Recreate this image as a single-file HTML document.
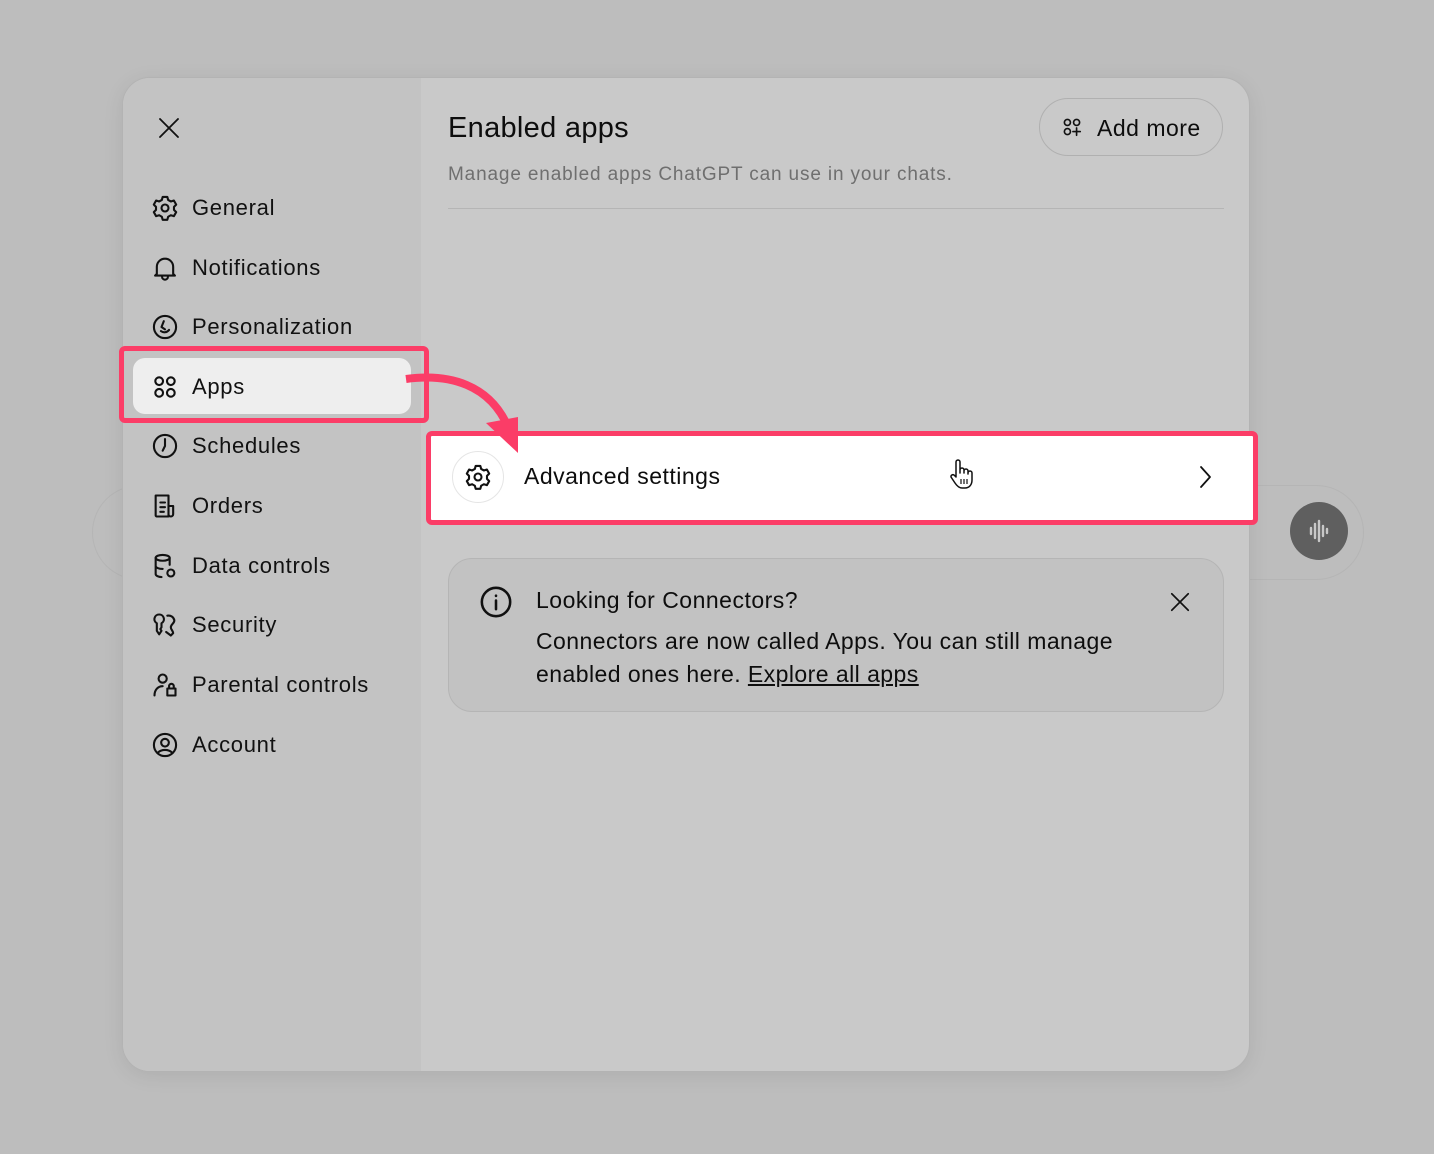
<!DOCTYPE html>
<html><head><meta charset="utf-8"><style>
*{box-sizing:border-box;margin:0;padding:0}
body{width:1434px;height:1154px;background:#bdbdbd;font-family:"Liberation Sans",sans-serif;position:relative;overflow:hidden;color:#0d0d0d}
.modal{position:absolute;left:122px;top:77px;width:1128px;height:995px;border-radius:28px;background:#c9c9c9;border:1px solid #b3b3b3;overflow:hidden;box-shadow:0 4px 20px rgba(0,0,0,.08)}
.side{position:absolute;left:0;top:0;width:298px;height:100%;background:#c3c3c3}
.item{position:absolute;left:28px;height:40px;display:flex;align-items:center;font-size:22px;color:#111;letter-spacing:.7px}
.item svg{width:28px;height:28px;margin-right:13px;fill:none;stroke:#111;stroke-width:1.8;stroke-linecap:round;stroke-linejoin:round}
.t{position:absolute;font-size:22px;letter-spacing:.5px}
svg.ic{fill:none;stroke:#111;stroke-width:1.8;stroke-linecap:round;stroke-linejoin:round}
</style></head><body>
<div style="position:absolute;left:92px;top:485px;width:1272px;height:95px;border-radius:48px;border:1px solid #b5b5b5"></div>
<div style="position:absolute;left:1290px;top:502px;width:58px;height:58px;border-radius:50%;background:#5f5f5f"></div>
<svg style="position:absolute;left:1305px;top:518px" width="28" height="26" viewBox="0 0 28 26"><path d="M6 10v6M10 6v14M14 3v20M18 8v10M22 11v4" stroke="#c8c8c8" stroke-width="2.4" stroke-linecap="round"/></svg>
<div class="modal">
 <div class="side"></div>
 <svg class="ic" style="position:absolute;left:34px;top:38px" width="24" height="24" viewBox="0 0 24 24"><path d="M3 3l18 18M21 3L3 21"/></svg>
 <div style="position:absolute;left:10px;top:280px;width:278px;height:56px;border-radius:12px;background:#eeeeee"></div>
 <div class="item" style="top:110px"><svg viewBox="0 0 24 24"><path d="M10 2.5h4l.7 2.6 2.3 1.3 2.6-.8 2 3.5-1.9 1.9v2.6l1.9 1.9-2 3.5-2.6-.8-2.3 1.3-.7 2.6h-4l-.7-2.6-2.3-1.3-2.6.8-2-3.5 1.9-1.9V11L2.4 9.1l2-3.5 2.6.8 2.3-1.3z"/><circle cx="12" cy="12" r="3"/></svg>General</div>
 <div class="item" style="top:170px"><svg viewBox="0 0 24 24"><path d="M5 17V11a7 7 0 0114 0v6l1.5 1.5h-17zM9.5 19.5a2.5 2.5 0 005 0"/></svg>Notifications</div>
 <div class="item" style="top:229px"><svg viewBox="0 0 24 24"><circle cx="12" cy="12" r="9.5"/><path d="M11 7l-2 5 3 2M8.5 15.5c2 1.5 5 1.5 7-1"/></svg>Personalization</div>
 <div class="item" style="top:289px"><svg viewBox="0 0 24 24"><circle cx="7" cy="7" r="3.3"/><circle cx="17" cy="7" r="3.3"/><circle cx="7" cy="17" r="3.3"/><circle cx="17" cy="17" r="3.3"/></svg>Apps</div>
 <div class="item" style="top:348px"><svg viewBox="0 0 24 24"><circle cx="12" cy="12" r="9.5"/><path d="M12 6v6l-2 4"/></svg>Schedules</div>
 <div class="item" style="top:408px"><svg viewBox="0 0 24 24"><path d="M4 3h11v18H5a1 1 0 01-1-1zM15 12h4v7a2 2 0 01-4 0M8 9h4M8 13h4M8 17h3"/></svg>Orders</div>
 <div class="item" style="top:468px"><svg viewBox="0 0 24 24"><ellipse cx="10" cy="5" rx="6" ry="2.5"/><path d="M4 5v14c0 1.4 2.5 2.5 5 2.5M16 5v6M4 12c0 1.4 2.5 2.5 6 2.5"/><circle cx="17" cy="18" r="3"/></svg>Data controls</div>
 <div class="item" style="top:527px"><svg viewBox="0 0 24 24"><path d="M7 3a4 4 0 00-2 7.5V17l2 3 2-3-1-1.5 1-1.5V10.5A4 4 0 007 3zM14 4a5 5 0 016 4c0 3-3 3-3 6 0 2 2 3 2 5l-2 2-4-3"/></svg>Security</div>
 <div class="item" style="top:587px"><svg viewBox="0 0 24 24"><circle cx="10" cy="6.5" r="3.5"/><path d="M3 21c0-5 3-8 7-8M14 15h7v6h-7zM15.5 15v-2a2 2 0 014 0v2"/></svg>Parental controls</div>
 <div class="item" style="top:647px"><svg viewBox="0 0 24 24"><circle cx="12" cy="12" r="9.5"/><circle cx="12" cy="10" r="3.3"/><path d="M6 18.5c3-3 9-3 12 0"/></svg>Account</div>

 <div class="t" style="left:325px;top:34px;font-size:29px;letter-spacing:.3px">Enabled apps</div>
 <div class="t" style="left:325px;top:86px;font-size:19px;color:#6f6f6f;letter-spacing:.85px">Manage enabled apps ChatGPT can use in your chats.</div>
 <div style="position:absolute;left:916px;top:20px;width:184px;height:58px;border-radius:29px;border:1.5px solid #b0b0b0"></div>
 <svg class="ic" style="position:absolute;left:938px;top:38px" width="22" height="22" viewBox="0 0 24 24"><circle cx="7" cy="7" r="3.3"/><circle cx="17" cy="7" r="3.3"/><circle cx="7" cy="17" r="3.3"/><path d="M17 13v8M13 17h8"/></svg>
 <div class="t" style="left:974px;top:37px;font-size:23px">Add more</div>
 <div style="position:absolute;left:325px;top:130px;width:776px;height:1px;background:#b5b5b5"></div>

 <div style="position:absolute;left:325px;top:480px;width:776px;height:154px;border-radius:24px;border:1.5px solid #b5b5b5;background:#c2c2c2"></div>
 <svg class="ic" style="position:absolute;left:356px;top:507px" width="34" height="34" viewBox="0 0 24 24"><circle cx="12" cy="12" r="10"/><path d="M12 11v6M12 7.5v.2"/></svg>
 <div class="t" style="left:413px;top:509px;font-size:23px">Looking for Connectors?</div>
 <div class="t" style="left:413px;top:547px;font-size:23px;line-height:33px;letter-spacing:.45px">Connectors are now called Apps. You can still manage<br>enabled ones here. <u>Explore all apps</u></div>
 <svg class="ic" style="position:absolute;left:1046px;top:513px" width="22" height="22" viewBox="0 0 24 24"><path d="M3 3l18 18M21 3L3 21"/></svg>
</div>

<div style="position:absolute;left:426px;top:431px;width:832px;height:94px;background:#fff;border:5px solid #fb3d67;border-radius:6px"></div>
<div style="position:absolute;left:452px;top:451px;width:52px;height:52px;border-radius:50%;border:1px solid #e5e5e5;background:#fff"></div>
<svg class="ic" style="position:absolute;left:464px;top:463px" width="28" height="28" viewBox="0 0 24 24"><path d="M10 2.5h4l.7 2.6 2.3 1.3 2.6-.8 2 3.5-1.9 1.9v2.6l1.9 1.9-2 3.5-2.6-.8-2.3 1.3-.7 2.6h-4l-.7-2.6-2.3-1.3-2.6.8-2-3.5 1.9-1.9V11L2.4 9.1l2-3.5 2.6.8 2.3-1.3z"/><circle cx="12" cy="12" r="3"/></svg>
<div style="position:absolute;left:524px;top:463px;font-size:23px;letter-spacing:.5px">Advanced settings</div>
<svg class="ic" style="position:absolute;left:1194px;top:465px" width="22" height="24" viewBox="0 0 22 24"><path d="M7 2l9 10-9 10"/></svg>
<svg style="position:absolute;left:948px;top:459px" width="30" height="32" viewBox="0 0 30 32"><path d="M8 3a2 2 0 014 0v11V11a2 2 0 014 0v3-2a2 2 0 014 0v3-1a2 2 0 014 0v7c0 5-3 8-7 8h-3c-3 0-5-2-7-5l-4-6a2 2 0 013-2l2 2z" fill="#fff" stroke="#111" stroke-width="1.5" stroke-linejoin="round"/><path d="M13 20v5M16 20v5M19 20v5" stroke="#111" stroke-width="1.2"/></svg>
<div style="position:absolute;left:119px;top:346px;width:310px;height:77px;border:5px solid #fb3d67;border-radius:6px"></div>
<svg style="position:absolute;left:400px;top:365px" width="130" height="100" viewBox="0 0 130 100"><path d="M6 14 C50 8 90 20 108 62" fill="none" stroke="#fb3d67" stroke-width="8"/><path d="M86 58 L118 52 L118 88 Z" fill="#fb3d67"/></svg>
</body></html>
